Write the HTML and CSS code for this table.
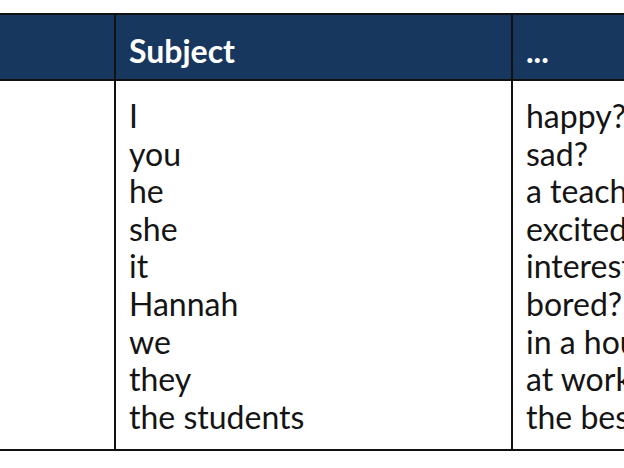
FILE: index.html
```html
<!DOCTYPE html>
<html>
<head>
<meta charset="utf-8">
<link rel="stylesheet" href="styles.css">
</head>
<body>
<div class="frame">
  <table class="grammar">
    <thead>
      <tr>
        <th class="c1"></th>
        <th class="c2">Subject</th>
        <th class="c3">...</th>
      </tr>
    </thead>
    <tbody>
      <tr>
        <td class="c1"></td>
        <td class="c2">I<br>you<br>he<br>she<br>it<br>Hannah<br>we<br>they<br>the students</td>
        <td class="c3">happy?<br>sad?<br>a teacher?<br>excited?<br>interested?<br>bored?<br>in a house?<br>at work?<br>the best?</td>
      </tr>
    </tbody>
  </table>
</div>
</body>
</html>
```
FILE: styles.css
```css
html, body {
  margin: 0;
  padding: 0;
  background: #ffffff;
}
.frame {
  width: 624px;
  height: 468px;
  overflow: hidden;
  padding-top: 13px;
  box-sizing: border-box;
}
.grammar {
  border-collapse: collapse;
  margin-left: -31px;
  table-layout: fixed;
  width: 900px;
  font-family: "Lato", "Noto Sans", sans-serif;
  font-size: 32px;
  line-height: 37.6px;
  color: #141414;
}
.grammar th,
.grammar td {
  border: 2px solid #111111;
  text-align: left;
  vertical-align: top;
  padding: 0 13px;
}
.grammar th {
  background: #17375e;
  color: #ffffff;
  font-weight: 700;
  height: 66px;
  padding-top: 17px;
  box-sizing: border-box;
}
.grammar td {
  padding-top: 16px;
  padding-bottom: 14px;
}
.c1 { width: 145px; }
.c2 { width: 397px; }
.c3 { width: 358px; }
```
